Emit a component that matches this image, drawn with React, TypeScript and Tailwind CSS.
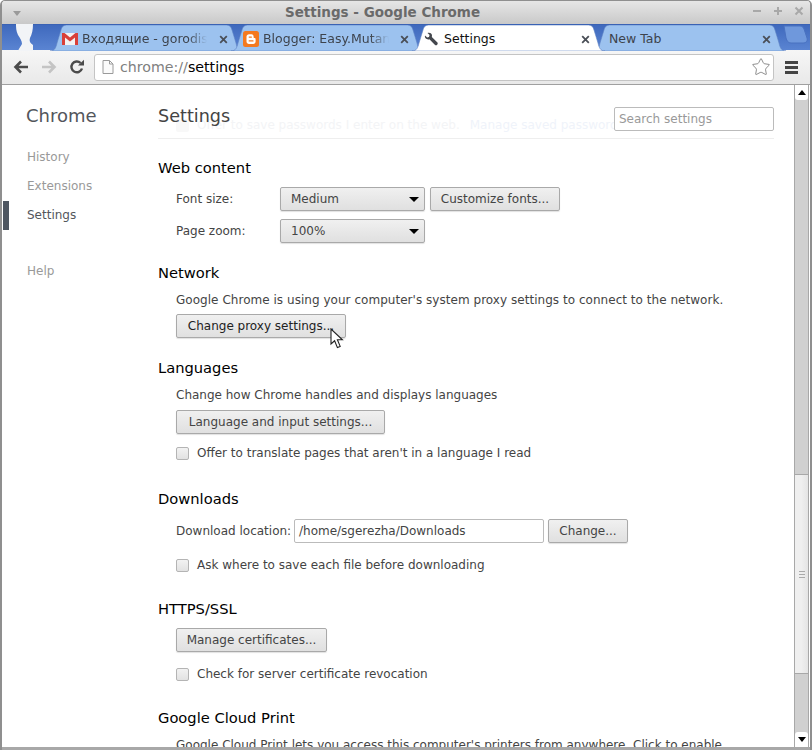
import { Star } from "lucide-react";

function TabShape({ fill }: { fill: string }) {
  return (
    <svg className="absolute inset-0" width="193" height="26" viewBox="0 0 193 26">
      <path
        d="M0 26C5 26 6 22 7 18L11 5C12 1 14 0 18 0L175 0C179 0 181 1 182 5L186 18C187 22 188 26 193 26Z"
        fill={fill}
        stroke="#5f83c4"
        strokeWidth="0.6"
      />
    </svg>
  );
}

function CloseX() {
  return (
    <svg width="9" height="9" viewBox="0 0 9 9" className="shrink-0">
      <path d="M1.2 1.2L7.8 7.8M7.8 1.2L1.2 7.8" stroke="#4a4f57" strokeWidth="1.8" />
    </svg>
  );
}

function GmailIcon() {
  return (
    <svg width="16" height="12" viewBox="0 0 16 12" className="shrink-0">
      <rect width="16" height="12" fill="#f3f3f3" />
      <path d="M0 0H2.5L8 4.5L13.5 0H16V12H13V4.6L8 8.4L3 4.6V12H0Z" fill="#d9403a" />
    </svg>
  );
}

function BloggerIcon() {
  return (
    <svg width="16" height="16" viewBox="0 0 16 16" className="shrink-0">
      <rect width="16" height="16" rx="2.5" fill="#f4791f" />
      <path
        d="M6 3.2H8.4C10 3.2 10.6 4.2 10.6 5.6V6.2C10.6 6.8 11 7 11.6 7.1C12.3 7.2 12.6 7.6 12.6 8.2V10.6C12.6 12 11.6 12.9 10.2 12.9H6C4.6 12.9 3.5 12 3.5 10.6V5.6C3.5 4.2 4.6 3.2 6 3.2Z"
        fill="#fff"
      />
      <rect x="5.6" y="5.4" width="3.4" height="1.3" rx="0.6" fill="#f4791f" />
      <rect x="5.6" y="9.2" width="5" height="1.3" rx="0.6" fill="#f4791f" />
    </svg>
  );
}

function WrenchIcon() {
  return (
    <svg width="14" height="14" viewBox="0 0 14 14" className="shrink-0">
      <path
        d="M1 3.5L3.2 5.6L5 4.9L5.6 3.1L3.5 1C5.4 0.2 7.4 1 7.9 2.8C8.1 3.6 8 4.3 7.8 4.9L13.2 10.3C13.9 11 13.9 12 13.2 12.7C12.5 13.4 11.5 13.4 10.8 12.7L5.4 7.2C3.2 8 0.2 6.3 1 3.5Z"
        fill="#44474d"
      />
    </svg>
  );
}

function Tab({
  fill,
  children,
  active,
  first,
}: {
  fill: string;
  children: React.ReactNode;
  active?: boolean;
  first?: boolean;
}) {
  return (
    <div className={`relative w-[193px] h-[26px] shrink-0 ${first ? "" : "-ml-[12px]"} ${active ? "z-10" : ""}`}>
      <TabShape fill={fill} />
      <div className="relative h-full flex items-center pl-[12px] pr-[15px] pt-[2px]">{children}</div>
    </div>
  );
}

function Btn({ w, children, dark }: { w: string; children: React.ReactNode; dark?: boolean }) {
  return (
    <div
      className={`h-[24px] ${w} shrink-0 flex items-center justify-center rounded-[2px] border border-[#a9a9a9] bg-gradient-to-b from-[#f0f0f0] to-[#e0e0e0] shadow-[0_1px_1px_rgba(0,0,0,0.12)] ${dark ? "text-[#222]" : "text-[#444]"}`}
    >
      {children}
    </div>
  );
}

function Select({ children }: { children: React.ReactNode }) {
  return (
    <div className="h-[24px] w-[145px] shrink-0 flex items-center justify-between pl-[10px] pr-[5px] rounded-[2px] border border-[#a9a9a9] bg-gradient-to-b from-[#f0f0f0] to-[#e0e0e0] shadow-[0_1px_1px_rgba(0,0,0,0.12)] text-[#444]">
      {children}
      <div className="w-0 h-0 border-x-[5px] border-x-transparent border-t-[5px] border-t-black" />
    </div>
  );
}

function Check({ label }: { label: string }) {
  return (
    <div className="flex items-center h-[20px] gap-[8px] text-[#444]">
      <div className="w-[13px] h-[13px] rounded-[2px] border border-[#b4b4b4] bg-gradient-to-b from-[#f2f2f2] to-[#e2e2e2]" />
      {label}
    </div>
  );
}

function Heading({ children }: { children: React.ReactNode }) {
  return <div className="h-[20px] leading-[20px] text-[14.7px] text-black">{children}</div>;
}

export default function App() {
  return (
    <div className="w-[812px] h-[750px] overflow-hidden flex flex-col bg-white font-['DejaVu_Sans',sans-serif] text-[12px] rounded-t-[5px] border-x-2 border-t border-[#8f8f8f] border-b-0">
      {/* Title bar */}
      <div className="h-[23px] shrink-0 relative flex items-center justify-center bg-gradient-to-b from-[#e6e6e6] to-[#c9c9c9] text-[13.5px] font-bold text-[#6a6a6a] pr-[47px]">
        <div className="absolute left-[11px] top-[10px] w-0 h-0 border-x-[4px] border-x-transparent border-t-[5px] border-t-[#9a9a9a]" />
        Settings - Google Chrome
        <div className="absolute right-[6px] top-[5px] flex items-center gap-[11px]">
          <svg width="10" height="10" viewBox="0 0 10 10">
            <path d="M1 5H9" stroke="#a8a8a8" strokeWidth="2" />
          </svg>
          <svg width="10" height="10" viewBox="0 0 10 10">
            <path d="M1 5H9M5 1V9" stroke="#a8a8a8" strokeWidth="2" />
          </svg>
          <svg width="10" height="10" viewBox="0 0 10 10">
            <path d="M1.5 1.5L8.5 8.5M8.5 1.5L1.5 8.5" stroke="#a8a8a8" strokeWidth="2" />
          </svg>
        </div>
      </div>

      {/* Tab strip */}
      <div className="h-[26px] shrink-0 relative flex pl-[48px] bg-gradient-to-b from-[#3f69bd] to-[#5a84d2] border-t border-[#3a62b4] text-[12.5px]">
        <svg className="absolute left-[13px] -top-[1px]" width="20" height="27" viewBox="0 0 20 27">
          <path
            d="M1 0H18C18 6 17 10 15 14C14 17 15 19 18 21V27H3C4 24 6 22 7 20C7 17 5 14 3 11C1 7 1 3 1 0Z"
            fill="#f2f4f7"
          />
        </svg>
        <Tab fill="#9cc2ef" first>
          <GmailIcon />
          <span className="ml-[4px] w-[125px] overflow-hidden whitespace-nowrap text-[#3d434c] [mask-image:linear-gradient(to_right,black_85%,transparent)]">
            Входящие - gorodiscuss
          </span>
          <span className="ml-auto">
            <CloseX />
          </span>
        </Tab>
        <Tab fill="#9cc2ef">
          <BloggerIcon />
          <span className="ml-[4px] w-[126px] overflow-hidden whitespace-nowrap text-[#3d434c] [mask-image:linear-gradient(to_right,black_85%,transparent)]">
            Blogger: Easy.Mutant.Blog
          </span>
          <span className="ml-auto">
            <CloseX />
          </span>
        </Tab>
        <Tab fill="#ffffff" active>
          <WrenchIcon />
          <span className="ml-[6px] text-[#111]">Settings</span>
          <span className="ml-auto">
            <CloseX />
          </span>
        </Tab>
        <Tab fill="#9cc2ef">
          <span className="ml-[4px] text-[#3d434c]">New Tab</span>
          <span className="ml-auto">
            <CloseX />
          </span>
        </Tab>
        <svg className="ml-[-3px] shrink-0" width="25" height="19" viewBox="0 0 25 19">
          <path d="M1 1H17C19 1 20 2 21 4L24 13C25 16 23 18 20 18H8C5 18 4 16 3 13Z" fill="#6f98dc" stroke="#4a72c0" />
        </svg>
      </div>

      {/* Toolbar */}
      <div className="h-[35px] shrink-0 flex items-center pl-[11px] pr-[12px] bg-gradient-to-b from-[#f6f6f6] to-[#e9e9e9] border-b border-[#a0a0a0]">
        <svg width="16" height="14" viewBox="0 0 16 14" className="shrink-0">
          <path d="M15 7H4M8 1.5L2.5 7L8 12.5" fill="none" stroke="#4b4b4b" strokeWidth="2.6" />
        </svg>
        <svg width="16" height="14" viewBox="0 0 16 14" className="shrink-0 ml-[12px]">
          <path d="M1 7H12M8 1.5L13.5 7L8 12.5" fill="none" stroke="#c4c4c4" strokeWidth="2.6" />
        </svg>
        <svg width="16" height="16" viewBox="0 0 16 16" className="shrink-0 ml-[12px]">
          <path d="M13 9.5A5.4 5.4 0 1 1 11.6 4" fill="none" stroke="#4b4b4b" strokeWidth="2.4" />
          <path d="M9 6.5H15V0.8Z" fill="#4b4b4b" />
        </svg>
        <div className="ml-[9px] h-[27px] flex-1 flex items-center rounded-[3px] border border-[#c4c4c4] bg-white pl-[7px] pr-[2px] text-[14.2px]">
          <svg width="12" height="14" viewBox="0 0 12 14" className="shrink-0">
            <path d="M1 0.5H7.5L11 4V13.5H1Z" fill="#fbfbfb" stroke="#9a9a9a" />
            <path d="M7.5 0.5V4H11" fill="none" stroke="#9a9a9a" />
          </svg>
          <span className="ml-[6px] pt-[1px] text-[#808080]">
            chrome://<span className="text-black">settings</span>
          </span>
          <Star className="ml-auto text-[#777]" size={20} strokeWidth={1} />
        </div>
        <div className="ml-[11px] w-[13px] flex flex-col gap-[2px] shrink-0">
          <div className="h-[3px] bg-[#444]" />
          <div className="h-[3px] bg-[#444]" />
          <div className="h-[3px] bg-[#444]" />
        </div>
      </div>

      {/* Page */}
      <div className="flex-1 min-h-0 flex relative border-b-[3px] border-[#a8a8a8]">
        {/* Sidebar */}
        <div className="w-[156px] shrink-0 pt-[19px] pl-[24px] relative">
          <div className="h-[24px] leading-[24px] text-[18px] text-[#53565c]">Chrome</div>
          <div className="mt-[15px] ml-[1px] h-[29px] leading-[29px] text-[#999]">History</div>
          <div className="ml-[1px] h-[29px] leading-[29px] text-[#999]">Extensions</div>
          <div className="ml-[1px] h-[29px] leading-[29px] text-[#53565c] relative">
            <div className="absolute -left-[24px] top-0 w-[6px] h-[29px] bg-[#4e5661]" />
            Settings
          </div>
          <div className="ml-[1px] mt-[27px] h-[29px] leading-[29px] text-[#999]">Help</div>
        </div>

        {/* Main column */}
        <div className="flex-1 min-w-0 relative overflow-hidden pt-[73px] text-[#444]">
          {/* Header laid over the scrolled page */}
          <div className="absolute left-0 top-0 w-[616px] h-[54px] border-b border-[#eeeeee]">
            <div className="absolute left-[18px] top-[31px] flex items-center gap-[8px] whitespace-nowrap text-[#f3f4f6] text-[12px]">
              <div className="w-[13px] h-[13px] rounded-[2px] bg-[#f8f8f8]" />
              <span>Offer to save passwords I enter on the web.</span>
              <span className="ml-[2px] text-[#eff3fa]">Manage saved passwords</span>
            </div>
            <div className="absolute left-0 top-[18px] h-[26px] leading-[26px] text-[17.6px] text-[#444]">Settings</div>
            <div className="absolute left-[456px] top-[22px] w-[160px] h-[24px] pl-[4px] leading-[22px] border border-[#bbb] rounded-[2px] bg-white text-[#999]">
              Search settings
            </div>
          </div>

          <Heading>Web content</Heading>
          <div className="pl-[18px] mt-[9px] flex flex-col gap-[8px]">
            <div className="flex items-center">
              <span className="w-[104px]">Font size:</span>
              <Select>Medium</Select>
              <div className="ml-[5px]">
                <Btn w="w-[130px]">Customize fonts...</Btn>
              </div>
            </div>
            <div className="flex items-center">
              <span className="w-[104px]">Page zoom:</span>
              <Select>100%</Select>
            </div>
          </div>

          <div className="mt-[20px]">
            <Heading>Network</Heading>
          </div>
          <div className="pl-[18px] mt-[6px]">
            <div className="h-[20px] leading-[22px] tracking-[0.035px]">
              Google Chrome is using your computer's system proxy settings to connect to the network.
            </div>
            <div className="mt-[5px]">
              <Btn w="w-[170px]" dark>
                Change proxy settings...
              </Btn>
            </div>
          </div>

          <div className="mt-[20px]">
            <Heading>Languages</Heading>
          </div>
          <div className="pl-[18px] mt-[6px]">
            <div className="h-[20px] leading-[22px]">Change how Chrome handles and displays languages</div>
            <div className="mt-[6px]">
              <Btn w="w-[209px]">Language and input settings...</Btn>
            </div>
            <div className="mt-[9px]">
              <Check label="Offer to translate pages that aren't in a language I read" />
            </div>
          </div>

          <div className="mt-[26px]">
            <Heading>Downloads</Heading>
          </div>
          <div className="pl-[18px] mt-[10px]">
            <div className="flex items-center">
              <span className="w-[118px] whitespace-nowrap">Download location:</span>
              <div className="w-[250px] h-[24px] leading-[22px] pl-[4px] border border-[#bbb] rounded-[2px] bg-white">
                /home/sgerezha/Downloads
              </div>
              <div className="ml-[4px]">
                <Btn w="w-[80px]">Change...</Btn>
              </div>
            </div>
            <div className="mt-[12px]">
              <Check label="Ask where to save each file before downloading" />
            </div>
          </div>

          <div className="mt-[24px]">
            <Heading>HTTPS/SSL</Heading>
          </div>
          <div className="pl-[18px] mt-[9px]">
            <Btn w="w-[151px]">Manage certificates...</Btn>
            <div className="mt-[12px]">
              <Check label="Check for server certificate revocation" />
            </div>
          </div>

          <div className="mt-[24px]">
            <Heading>Google Cloud Print</Heading>
          </div>
          <div className="pl-[18px] mt-[7px] h-[20px] leading-[20px] whitespace-nowrap">
            Google Cloud Print lets you access this computer's printers from anywhere. Click to enable.
          </div>
        </div>

        {/* Scrollbar */}
        <div className="w-[15px] shrink-0 mr-[1px] flex flex-col border-x border-[#a8a8a8] bg-[#d0d0d0]">
          <div className="h-[15px] shrink-0 bg-white flex items-center justify-center rounded-b-[3px]">
            <div className="w-0 h-0 border-x-[4px] border-x-transparent border-b-[5px] border-b-black" />
          </div>
          <div className="h-[374px] shrink-0" />
          <div className="h-[200px] shrink-0 flex flex-col items-center justify-center gap-[2px] border-y border-[#a8a8a8] bg-gradient-to-r from-[#efefef] via-[#efefef] to-[#e4e4e4]">
            <div className="w-[6px] h-px bg-[#aaa]" />
            <div className="w-[6px] h-px bg-[#aaa]" />
            <div className="w-[6px] h-px bg-[#aaa]" />
          </div>
          <div className="flex-1" />
          <div className="h-[15px] shrink-0 bg-white flex items-center justify-center rounded-t-[3px]">
            <div className="w-0 h-0 border-x-[4px] border-x-transparent border-t-[5px] border-t-black" />
          </div>
        </div>

        {/* Mouse pointer */}
        <svg className="absolute left-[328px] top-[243px]" width="15" height="21" viewBox="0 0 15 21">
          <path d="M1 1V16L4.6 12.8L7.4 19.6L10.2 18.4L7.4 11.8H12.4Z" fill="#fff" stroke="#222" strokeWidth="1.1" />
        </svg>
      </div>
    </div>
  );
}
